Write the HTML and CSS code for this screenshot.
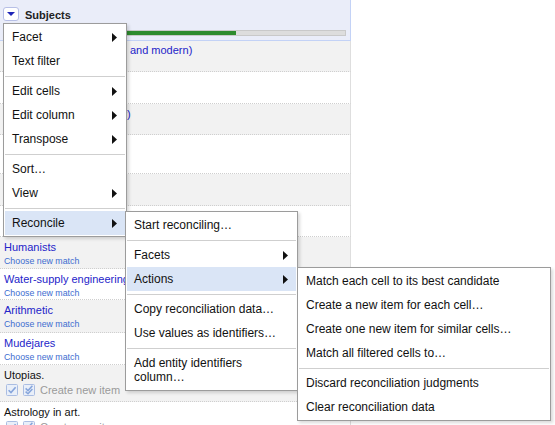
FILE: index.html
```html
<!DOCTYPE html>
<html>
<head>
<meta charset="utf-8">
<link rel="stylesheet" href="styles.css">
</head>
<body>
<div class="page">
  <div class="column">
    <div class="col-header">
      <div class="col-title">
        <span class="dd-btn"><svg width="8" height="4" viewBox="0 0 8 4"><path d="M0 0H8L4 4Z" fill="#1f25b8"/></svg></span>
        <span class="col-name">Subjects</span>
      </div>
      <div class="progress"><div class="progress-fill" style="width:68%"></div></div>
    </div>

    <div class="row alt row-s first">
      <a class="cell-link">History of logic (Medieval and modern)</a>
    </div>
    <div class="row"></div>
    <div class="row alt row-s">
      <a class="cell-link">Mathematics (Philosophy)</a>
    </div>
    <div class="row row-xl"></div>
    <div class="row alt"></div>
    <div class="row row-s"></div>
    <div class="row alt">
      <a class="cell-link">Humanists</a>
      <span class="choose">Choose new match</span>
    </div>
    <div class="row row-s">
      <a class="cell-link">Water-supply engineering</a>
      <span class="choose">Choose new match</span>
    </div>
    <div class="row alt row-l">
      <a class="cell-link">Arithmetic</a>
      <span class="choose">Choose new match</span>
    </div>
    <div class="row">
      <a class="cell-link">Mudéjares</a>
      <span class="choose">Choose new match</span>
    </div>
    <div class="row alt row-create">
      <span class="cell-text">Utopias.</span>
      <div class="recon-actions">
        <svg class="cbox" width="12" height="12" viewBox="0 0 12 12"><rect x=".5" y=".5" width="11" height="11" rx="1" fill="#e9eff9" stroke="#aabde2"/><path d="M2.6 6.2L5 8.6L9.6 3.2" fill="none" stroke="#86a5db" stroke-width="1.6"/></svg>
        <svg class="cbox" width="12" height="12" viewBox="0 0 12 12"><rect x=".5" y=".5" width="11" height="11" rx="1" fill="#e9eff9" stroke="#aabde2"/><path d="M2.6 4.4L5 6.6L9.4 1.8" fill="none" stroke="#86a5db" stroke-width="1.5"/><path d="M2.6 7.6L5 9.8L9.4 5" fill="none" stroke="#86a5db" stroke-width="1.5"/></svg>
        <span class="create">Create new item</span>
      </div>
    </div>
    <div class="row row-last">
      <span class="cell-text">Astrology in art.</span>
      <div class="recon-actions">
        <svg class="cbox" width="12" height="12" viewBox="0 0 12 12"><rect x=".5" y=".5" width="11" height="11" rx="1" fill="#e9eff9" stroke="#aabde2"/><path d="M2.6 6.2L5 8.6L9.6 3.2" fill="none" stroke="#86a5db" stroke-width="1.6"/></svg>
        <svg class="cbox" width="12" height="12" viewBox="0 0 12 12"><rect x=".5" y=".5" width="11" height="11" rx="1" fill="#e9eff9" stroke="#aabde2"/><path d="M2.6 4.4L5 6.6L9.4 1.8" fill="none" stroke="#86a5db" stroke-width="1.5"/><path d="M2.6 7.6L5 9.8L9.4 5" fill="none" stroke="#86a5db" stroke-width="1.5"/></svg>
        <span class="create">Create new item</span>
      </div>
    </div>
  </div>

  <div class="menu menu-main">
    <div class="item"><span>Facet</span><svg class="arrow" viewBox="0 0 5 9"><path d="M0 0L5 4.5L0 9Z"/></svg></div>
    <div class="item"><span>Text filter</span></div>
    <div class="sep"></div>
    <div class="item"><span>Edit cells</span><svg class="arrow" viewBox="0 0 5 9"><path d="M0 0L5 4.5L0 9Z"/></svg></div>
    <div class="item"><span>Edit column</span><svg class="arrow" viewBox="0 0 5 9"><path d="M0 0L5 4.5L0 9Z"/></svg></div>
    <div class="item"><span>Transpose</span><svg class="arrow" viewBox="0 0 5 9"><path d="M0 0L5 4.5L0 9Z"/></svg></div>
    <div class="sep"></div>
    <div class="item"><span>Sort…</span></div>
    <div class="item"><span>View</span><svg class="arrow" viewBox="0 0 5 9"><path d="M0 0L5 4.5L0 9Z"/></svg></div>
    <div class="sep"></div>
    <div class="item active"><span>Reconcile</span><svg class="arrow" viewBox="0 0 5 9"><path d="M0 0L5 4.5L0 9Z"/></svg></div>
  </div>

  <div class="menu menu-recon">
    <div class="item"><span>Start reconciling…</span></div>
    <div class="sep"></div>
    <div class="item"><span>Facets</span><svg class="arrow" viewBox="0 0 5 9"><path d="M0 0L5 4.5L0 9Z"/></svg></div>
    <div class="item active"><span>Actions</span><svg class="arrow" viewBox="0 0 5 9"><path d="M0 0L5 4.5L0 9Z"/></svg></div>
    <div class="sep"></div>
    <div class="item"><span>Copy reconciliation data…</span></div>
    <div class="item"><span>Use values as identifiers…</span></div>
    <div class="sep"></div>
    <div class="item"><span>Add entity identifiers column…</span></div>
  </div>

  <div class="menu menu-actions">
    <div class="item"><span>Match each cell to its best candidate</span></div>
    <div class="item"><span>Create a new item for each cell…</span></div>
    <div class="item"><span>Create one new item for similar cells…</span></div>
    <div class="item"><span>Match all filtered cells to…</span></div>
    <div class="sep"></div>
    <div class="item"><span>Discard reconciliation judgments</span></div>
    <div class="item"><span>Clear reconciliation data</span></div>
  </div>
</div>
</body>
</html>
```
FILE: styles.css
```css
* { box-sizing: border-box; }

body {
  margin: 0;
  font-family: "Liberation Sans", Arial, sans-serif;
  background: #fff;
  overflow: hidden;
}

.page {
  position: relative;
  width: 555px;
  height: 425px;
  overflow: hidden;
}

.column {
  width: 351px;
}

.col-header {
  height: 41px;
  background: #eaedf9;
  border-right: 1px solid #c3d2f6;
  border-bottom: 1px solid #c3d2f6;
  padding: 7px 4px 0 3px;
}

.col-title {
  display: flex;
  align-items: center;
  height: 14px;
  gap: 6px;
}

.dd-btn {
  width: 16px;
  height: 14px;
  border: 1px solid #b7bfe6;
  border-radius: 3px;
  background: #fff;
  display: flex;
  align-items: center;
  justify-content: center;
}

.col-name {
  font-weight: bold;
  font-size: 11px;
  line-height: 14px;
  color: #222;
  padding-top: 1px;
}

.progress {
  height: 6px;
  margin-top: 9px;
  border: 1px solid #c9c9c9;
  background: #dddddd;
}

.progress-fill {
  height: 100%;
  background: #2e8b2e;
}

.row {
  height: 32px;
  padding: 3px 4px 0;
  border-bottom: 1px dotted #cfcfcf;
  border-right: 1px solid #dedede;
  background: #fff;
  overflow: hidden;
}

.row.alt { background: #f2f2f2; }
.row-s { height: 31px; }
.row-l { height: 33px; }
.row-xl { height: 39px; }
.row-create { height: 37px; }
.row-last { height: 40px; }
.row.first { padding-top: 2px; }

.cell-link {
  display: block;
  font-size: 11px;
  line-height: 14px;
  color: #2424c9;
  white-space: nowrap;
  text-decoration: none;
}

.choose {
  display: block;
  font-size: 8.8px;
  line-height: 13px;
  margin-top: 1px;
  color: #3d6cd0;
  white-space: nowrap;
}

.cell-text {
  display: block;
  font-size: 11px;
  line-height: 14px;
  color: #111;
}

.recon-actions {
  display: flex;
  align-items: center;
  gap: 5px;
  height: 13px;
  margin-top: 1px;
  padding-left: 2px;
}

.cbox { flex: none; }

.create {
  font-size: 11px;
  color: #9a9a9a;
  white-space: nowrap;
}

.menu {
  position: absolute;
  background: #fff;
  border: 1px solid #9c9c9c;
  padding: 1px;
  box-shadow: 2px 2px 3px rgba(0, 0, 0, 0.15);
  font-size: 12px;
  color: #111;
}

.menu-main { left: 3px; top: 23px; width: 124px; }
.menu-recon { left: 125px; top: 211px; width: 173px; }
.menu-actions { left: 297px; top: 267px; width: 254px; }

.item {
  display: flex;
  align-items: center;
  padding: 5px 8px 5px 7px;
  line-height: 14px;
}

.item.active { background: #dae5f6; }

.arrow {
  flex: none;
  width: 5px;
  height: 9px;
  margin-left: auto;
  fill: #111;
}

.sep {
  height: 1px;
  margin: 3px 0 2px;
  background: #cfcfcf;
}
```
